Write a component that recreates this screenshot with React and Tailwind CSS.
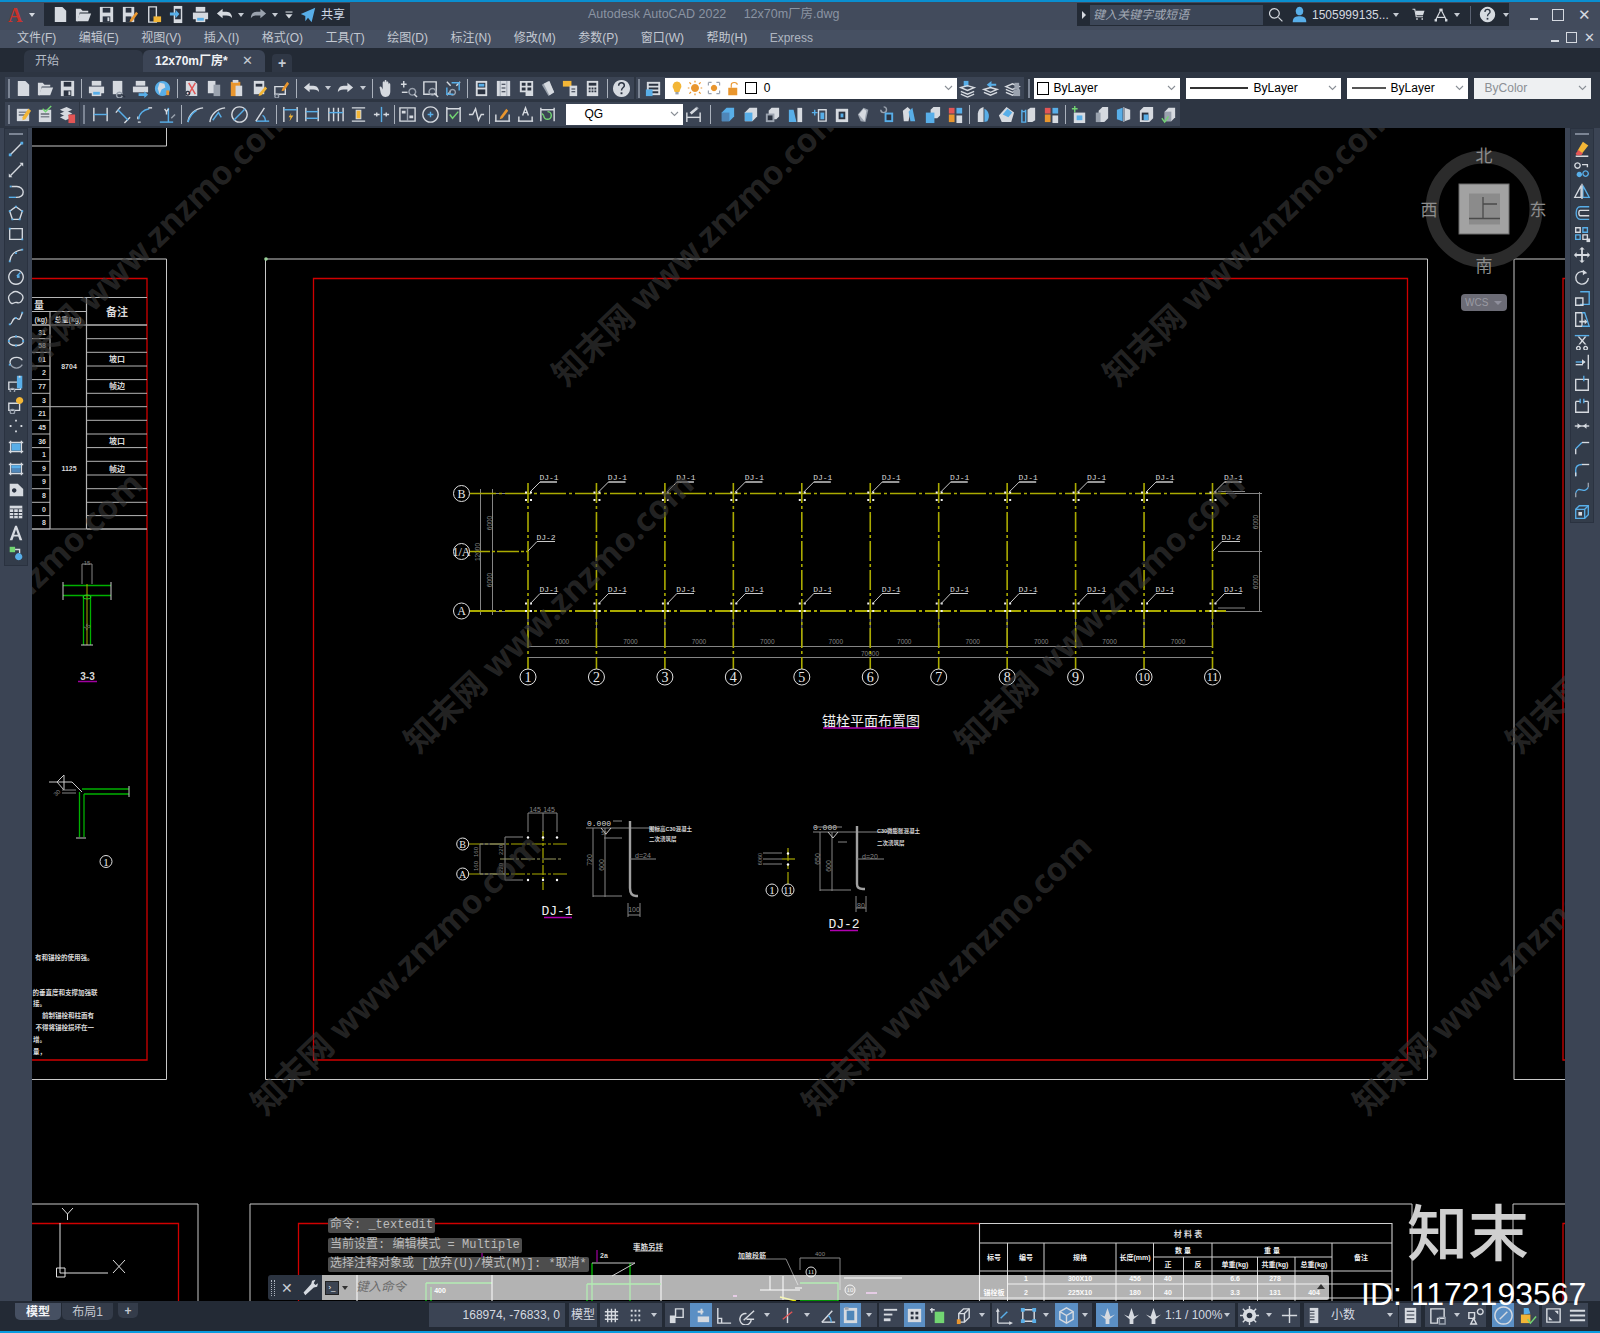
import React from 'react';

const C = { w: '#d6dae0', b: '#58aee8', y: '#f3b636', g: '#72d572', r: '#e25555', k: '#9aa2ae', o: '#e9962e', d: '#2a3240', e: '#4f86b8', p: '#f2f2f2' };
const ICONS = {
  new: 'W|M4 2h8l4 4v12H4z',
  open: 'W|M2 17V4h5l2 2h6v2H6L4 17z;W|M6 9h12l-3 8H3z',
  save: 'W|M3 2h14v16H3z;D|M6 3h8v5H6z;D|M6 12h8v6H6z;W|M11 13h2v4h-2z',
  saveas: 'W|M3 2h12v16H3z;D|M6 3h6v5H6z;D|M6 12h6v6H6z;O|M11 15l6-8 2 2-6 8-3 1z',
  sheet: 'w|M5 2h8v16H5z;D|M7 5h4v9H7z;Y|M10 12h8v6h-8z',
  upload: 'W|M6 1h9v18H6z;D|M7.5 4h6v11h-6z;B|M2 8h6V5l4 4.5-4 4.5v-3H2z',
  print: 'W|M5 2h10v5H5z;W|M2 8h16v7H2z;W|M5 12h10v6H5z;B|M6.5 13.500h7v3h-7z',
  undo: 'W|M2 9l6-5v3h4c4 0 6 3 6 7-1-2-3-3-6-3H8v3z',
  redo: 'K|M18 9l-6-5v3H8c-4 0-6 3-6 7 1-2 3-3 6-3h4v3z',
  redow: 'W|M18 9l-6-5v3H8c-4 0-6 3-6 7 1-2 3-3 6-3h4v3z',
  more: 'W|M5 5h10v1.500H5z;W|M5 9l5 0 5 0-5 6z',
  share: 'B|M2 9L18 2l-4 16-4-5-3 4v-6z',
  preview: 'W|M4 2h10v14H4z;k|M11 14a3 3 0 1 0 .01 0;d|M13 16l4 3',
  plot: 'W|M5 2h10v5H5z;W|M2 8h16v6H2z;B|M8 15h6v-2l4 3.500-4 3.500v-2H8z',
  globe: 'B|M10 2a8 8 0 1 0 .01 0z;W|M7 4l5 1 1 4-4 2-2 5-2-6z;O|M14 12h3v5h-3z',
  cut: 'W|M3 2h9l3 3v13H3z;r|M6 4l7 12;r|M13 4L6 16;d|M5 13a2 2 0 1 0 .01 0',
  copy: 'W|M3 2h8v13H3z;K|M9 6h7v12H9z',
  paste: 'O|M4 3h10v15H4z;W|M9 7h7v11H9z;W|M6 1h6v3H6z',
  match: 'W|M4 2h11v14H4z;D|M6 5h7v3H6z;Y|M10 15l6-7 2 2-6 7-3 1z',
  blockp: 'w|M3 8h11v8H3z;k|M5 16a2 2 0 1 0 .01 0;O|M11 10l5-7 2 2-5 7-3 1z',
  hand: 'W|M3 10c-1-2 1-3 2-1l1 2V4c0-2 2-2 2 0V2.500c0-2 2-2 2 0V4c0-2 2-2 2 0v2c0-2 2-2 2 0v7c0 4-2 6-5 6-2 0-4-1-5-4z',
  zoomr: 'w|M5 2v7M2 5.500h6;w|M3 14h6;k|M14 10a3.500 3.500 0 1 0 .01 0;w|M16 16l3 3',
  zoomw: 'w|M3 3h13v13H3z;k|M12 10a3.500 3.500 0 1 0 .01 0;w|M14 15l4 4',
  zoomp: 'w|M3 3l4 4M13 7l4-4M3 17l4-4;b|M8 4h8v8;k|M9 11a3 3 0 1 0 .01 0;b|M3 9v7h7',
  props: 'W|M4 2h12v16H4z;D|M6 4h8v5H6z;B|M7 5h6v3H7z;D|M6 11h8v5H6z',
  grid2: 'W|M3 2h14v16H3z;K|M6 2h1v16H6z;K|M13 2h1v16h-1z;D|M8 5h4v1H8zM8 9h4v1H8zM8 13h4v1H8z',
  tool: 'W|M3 2h14v16H9v-4H3z;D|M5 4h4v3H5zM11 4h4v3h-4zM5 9h4v3H5zM11 9h4v3h-4z',
  sheetset: 'K|M3 6l7-4 6 12-6 4z;W|M5 5l6-3 5 12-5 3z',
  markup: 'Y|M2 2h9v6H2z;W|M9 7h8v11H9z;D|M11 10h4v1h-4zM11 13h4v1h-4z',
  calc: 'W|M4 2h12v16H4z;D|M6 4h8v3H6z;D|M6 9h2v2H6zM9 9h2v2H9zM12 9h2v2h-2zM6 12h2v2H6zM9 12h2v2H9zM12 12h2v2h-2z',
  help: 'W|M10 1a9 9 0 1 0 .01 0z;D|M9 14h2v2H9z;d|M7 7c0-4 6-4 6 0 0 2-3 2-3 5',
  layers: 'W|M3 3h14v14H3z;D|M5 5h10v2H5zM5 9h10v2H5zM5 13h10v2H5z;B|M2 11h7v7H2z',
  lprev: 'B|M6 2h5v6H6z;w|M3 9l7-2 7 2-7 3z;w|M3 13l7 3 7-3;w|M3 16l7 3 7-3',
  lundo: 'B|M6 6l5-4v3h5v2h-5v3z;w|M3 11l7-2 7 2-7 3z;w|M3 14l7 3 7-3',
  llock: 'w|M3 8l7-3 7 3-7 3z;w|M3 11l7 3 7-3;w|M3 14l7 3 7-3;K|M11 11h7v7h-7z;K|M12 4h5v7h-5z',
  bulb: 'Y|M10 2a6 6 0 0 1 4 10l-1 3H7l-1-3a6 6 0 0 1 4-10z;K|M8 15h4v3H8z',
  sun: 'O|M10 5a5 5 0 1 0 .01 0z;o|M10 1v2M10 17v2M1 10h2M17 10h2M3 3l2 2M15 15l2 2M3 17l2-2M15 5l2-2',
  frz: 'k|M3 3h4M13 3h4M3 3v4M17 3v4M3 13v4M17 13v4M3 17h4M13 17h4;O|M10 6a4 4 0 1 0 .01 0z',
  lock: 'O|M3 9h12v10H3z;o|M7 9V5c0-4 8-4 8 0',
  note: 'W|M3 4h13v13H3z;D|M5 7h9v1H5zM5 10h9v1H5z;Y|M9 13l6-9 3 2-6 9-3 1z',
  notechk: 'W|M3 5h13v13H3z;D|M5 9h9v1H5zM5 12h9v1H5z;g|M7 4l3 3 6-6',
  layerr: 'W|M2 5l7-3 6 3-7 3z;W|M2 9l7-3 6 3-7 3z;W|M2 13l7-3 6 3-7 3z;R|M11 10h7v9h-7z',
  dlin: 'w|M3 3v14M17 3v14;b|M3 10h14',
  dali: 'w|M3 8l5-6M12 19l6-6;b|M5 5l11 11',
  dang: 'w|M3 18h3M3 15V12;b|M4 15C4 9 9 5 15 4;w|M14 3l4 0',
  dord: 'b|M3 18h14;b|M12 18V3;w|M8 4l2 3 2-3M10 7v3;k|M15 14l4-4',
  arc: 'w|M2 18C3 10 9 4 18 3;b|M2 18C4 12 7 8 11 6',
  arcd: 'w|M2 18C3 10 9 4 18 3;b|M5 16l6-8 3 5',
  cir: 'w|M10 2a8 8 0 1 0 .01 0z;b|M4 16L16 4',
  ang: 'b|M3 17h14;w|M3 17L12 3;b|M10 11c2 1 3 3 3 6',
  dq: 'w|M3 2v16M17 2v16;Y|M8 13l3-5-1 3h3l-4 6 1-4z;b|M3 5h14',
  dbase: 'w|M3 3v14M16 3v14;b|M3 7h13;b|M3 14h13',
  dcont: 'w|M3 3v14M8 3v14M13 3v14M18 3v14;b|M3 8h15',
  dspace: 'w|M3 3h14M3 17h14;W|M7 5h6v10H7z;Y|M8 6h4v8H8z',
  dbreak: 'b|M10 2v16;w|M2 10h6M12 10h6;w|M5 8v4M15 8v4',
  tol: 'w|M2 3h16v14H2z;k|M10 3v14;W|M4 6h4v3H4zM12 11h4v3h-4z',
  ccen: 'w|M10 2a8 8 0 1 0 .01 0z;b|M10 7v6M7 10h6',
  insp: 'w|M3 2v16M17 2v16M3 4h14;g|M6 10l3 4 6-7',
  jog: 'w|M2 10h4l3-6 3 12 3-6h3;',
  dedit: 'w|M2 17h16;w|M3 10v7M17 10v7;O|M8 12l6-8 2 2-6 8-3 1z',
  dtedit: 'w|M2 17h16;w|M3 12v5M17 12v5;w|M7 11l3-8 3 8M8 8h4',
  dupd: 'w|M3 3v14M17 3v14M3 5h14;g|M10 7a4 4 0 1 1-4 4;g|M6 11l-2-2',
  dstyle: 'w|M3 8v10M17 8v10;w|M3 13h14;W|M6 8l7-6 2 2-7 6z;k|M13 2l2 2',
  solA: 'B|M4 8l5-5h8v9l-5 5H4z;E|M4 8h8v9H4z',
  solB: 'W|M4 8l5-5h8v9l-5 5H4z;B|M4 8h8v9H4z',
  solC: 'W|M6 6l3-3h8v9l-3 3H6z;K|M3 9h9v9H3z;D|M5 11h5v5H5z',
  solD: 'B|M3 5h5l3 13H3z;W|M12 3h5v15h-5z',
  solE: 'b|M3 8h6M6 5v6;w|M10 5h8v12h-8z;B|M12 8h4v7h-4z',
  solF: 'W|M4 4h13v14H4z;D|M7 7h7v8H7z;B|M9 9h3v4H9z',
  solG: 'K|M3 10l6-7 5 2-3 13-5-1z;W|M4 10l5-6 3 2-2 11z;R|M13 2l5 5M18 2l-5 5',
  solH: 'k|M4 5a3 3 0 1 0 3-3;B|M8 8h9v10H8z;D|M10 10h5v6h-5z',
  solI: 'W|M3 6l5-4 3 3-2 12H4z;B|M9 7l4-4 3 14h-5z',
  solJ: 'W|M8 5l3-3h7v9l-3 3H8z;B|M3 8h9v11H3z',
  solK: 'R|M3 3h6v6H3z;B|M11 3h6v6h-6z;O|M3 10h6v8H3z;W|M11 11h6v8h-6z',
  solL: 'W|M4 9a8 8 0 0 1 6-7v16H4z;B|M11 4c5 2 6 9 3 13l-3 1z',
  solM: 'W|M2 11l8-9 8 6-3 10H5z;B|M6 10l5-6 5 4-4 5z',
  solN: 'b|M3 5a2 2 0 1 0 4 0v13H3z;W|M9 5l3-2h5v13l-3 2H9z',
  solO: 'g|M5 1v7M2 4h6;W|M4 8h12v11H4z;B|M7 11h6v5H7z',
  solP: 'W|M7 6l4-4h6v12l-4 4H7z;K|M4 8h5v10H4z',
  solQ: 'B|M2 5l6-2v14l-6-2z;W|M10 3l6 2v10l-6 2z;K|M8.500 2h1.500v16H8.500z',
  solR: 'W|M3 6l4-4h10v12l-4 4H3z;D|M5 8h7v8H5z;B|M7 10h5v6H7z',
  solS: 'W|M6 7l4-4h7v10l-4 4H6z;K|M6 7h7v10H6z;g|M3 14l3 4 4-6',
  mline: 'w|M4 16L16 4;B|M2 15h3v3H2zM15 2h3v3h-3z',
  mxline: 'w|M4 16L16 4;W|M14 2h4v4zM2 18v-4l4 4z',
  mpl: 'b|M2 17h8;w|M10 17c6 0 8-3 8-6s-3-6-7-6H5;B|M3 4h2v2H3z',
  mpoly: 'w|M10 3l7 5-3 9H6L3 8z;B|M9 2h2v2H9zM16 7h2v2h-2zM13 16h2v2h-2zM5 16h2v2H5zM2 7h2v2H2z',
  mrect: 'w|M3 4h14v12H3z;B|M2 3h2v2H2zM16 15h2v2h-2z',
  marc: 'w|M3 17C4 9 10 5 17 4;B|M2 16h2v2H2zM9 7h2v2H9zM16 3h2v2h-2z',
  mcir: 'w|M10 2a8 8 0 1 0 .01 0z;B|M11 8h3v3h-3z;b|M11 9l4-4',
  mrev: 'w|M6 4c4-3 7 0 9 1s4 4 2 7-3 4-6 3-4 2-6 1-4-6-3-8 2-3 4-4z',
  mspl: 'w|M3 16c3 0 3-8 7-7s3 5 7-6;B|M2 15h2v2H2zM9 8h2v2H9zM16 2h2v2h-2z',
  mell: 'w|M10 5c-11 0-11 10 0 10s11-10 0-10z;B|M1 9h2v2H1zM17 9h2v2h-2zM9 4h2v2H9zM9 14h2v2H9z',
  mela: 'w|M4 13C0 5 14 2 17 8;k|M4 13c3 5 10 5 13 0;B|M2 12h2v2H2z',
  mins: 'w|M2 9h13v8H2z;k|M6 16a2.500 2.500 0 1 0 .01 0;B|M11 2h6v14h-6z;W|M13 2h2v2h-2z',
  mblk: 'w|M2 8h12v8H2z;k|M6 15a2.500 2.500 0 1 0 .01 0;Y|M14 1a4 4 0 1 0 .01 0z',
  mpt: 'W|M9 3h2v2H9zM3 9h2v2H3zM15 9h2v2h-2zM9 15h2v2H9z',
  mhat: 'w|M4 3v14M16 3v14M2 5h16M2 15h16;B|M5 6h10v8H5z',
  mgra: 'w|M4 3v14M16 3v14M2 5h16M2 15h16;E|M5 6h10v8H5z;B|M5 6h10v3H5z',
  mreg: 'W|M3 3h9l6 6v8H3z;D|M8 8a2.500 2.500 0 1 0 .01 0z',
  mtbl: 'W|M3 3h14v14H3z;D|M3 6h14v1H3zM3 10h14v1H3zM3 13.500h14v1H3zM7 6h1v11H7zM12 6h1v11h-1z',
  mtxt: 'W|M9 2h2l6 16h-3l-1.500-4h-5L6 18H3zM10 6l-2 6h4z',
  madd: 'G|M3 2h6v6H3z;w|M9 5h5v4;B|M13 9a4 4 0 1 0 .01 0z',
  erase: 'p|M3 18h14;Y|M11 2l6 4-7 9-5-3z;R|M6 11l5 4-2 2H4l-1-2z',
  rcopy: 'w|M5 2a3 3 0 1 0 .01 0z;w|M10 4h6v3;B|M7 12a3 3 0 1 0 .01 0z;b|M14 11a3 3 0 1 0 .01 0z',
  mirror: 'w|M9 4v13H2z;b|M11 4v13h7z;w|M10 2v17',
  offset: 'b|M18 3H8C2 3 2 17 8 17h10;w|M18 7H8C6 7 6 13 8 13h10',
  array: 'w|M3 3h5v5H3z;b|M11 3h5v5h-5z;b|M3 11h5v5H3z;w|M11 11h5v5h-5z;W|M15 15h4v4h-4z',
  move: 'W|M10 1l3 3h-2v5h5V7l3 3-3 3v-2h-5v5h2l-3 3-3-3h2v-5H4v2l-3-3 3-3v2h5V4H7z',
  rot: 'w|M15 6a7 7 0 1 0 2 5;W|M11 2l4 3-4 3z',
  scale: 'b|M8 3h10v14H8;w|M3 10h8v8H3z',
  stretch: 'w|M3 3h7v15H3z;b|M10 3h3l5 15h-8;W|M7 12h6v-2l3 3-3 3v-2H7z',
  trim: 'b|M2 4h16;W|M5 5l8 9h2L7 5z;W|M13 5l-7 9h2l7-9z;w|M6 16a2 2 0 1 0 .01 0;w|M14 16a2 2 0 1 0 .01 0',
  extend: 'w|M17 2v16;b|M3 10h10;W|M10 7l4 3-4 3z;w|M3 13h8',
  brk: 'w|M3 6h14v12H3z;b|M12 2v6;',
  brk2: 'w|M3 6h5M12 6h5M3 6v12h14V6;b|M8 3v5M12 3v5',
  join: 'w|M2 10h16;W|M5 7l4 3-4 3zM15 7l-4 3 4 3z',
  cham: 'w|M3 18v-6;b|M3 12l7-7;w|M10 5h8',
  fil: 'b|M3 18v-7c0-4 3-6 7-6;w|M10 5h8;w|M3 18v-4',
  blnd: 'k|M3 18v-5;b|M3 13c4-9 8 3 14-6;k|M17 7V2',
  box3: 'b|M3 7l4-4h10v10l-4 4H3z;b|M3 7h10v10M13 7l4-4;W|M6 10h4v4H6z',
  grid: 'w|M6 3v14M10 3v14M14 3v14M3 6h14M3 10h14M3 14h14',
  sgrid: 'W|M5 4h2v2H5zM9 4h2v2H9zM13 4h2v2h-2zM5 9h2v2H5zM9 9h2v2H9zM13 9h2v2h-2zM5 14h2v2H5zM9 14h2v2H9zM13 14h2v2h-2z',
  stm: 'w|M9 3h8v9H9z;W|M3 10h6v8H3z',
  stinf: 'W|M9 3h2v6H9zM6 5h6v2H6z;W|M6 11h12v6H6z',
  stort: 'w|M4 2v16h14M4 13h4v5',
  stpol: 'w|M10 8a6 6 0 1 0 5 6;w|M7 15L18 5M10 14h8',
  stisn: 'w|M10 2v16;W|M6 6l8 8;r|M5 14l10-8',
  stang: 'w|M3 17h14;w|M3 17L14 5;b|M10 10c2 2 3 4 3 7',
  stbox: 'W|M3 2h14v16H3z;E|M6 5h8v10H6z;K|M4 1h4v3H4z',
  stlw: 'W|M3 3h14v2H3z;W|M3 8h9v2H3z;W|M3 13h7v3H3z',
  sttr: 'W|M3 3h14v14H3z;D|M6 6h3v3H6zM11 6h3v3h-3zM6 11h3v3H6zM11 11h3v3h-3z',
  stadd: 'G|M6 6h10v12H6z;w|M3 2v5M1 4h5',
  stiso: 'w|M5 8l5-5h6v9l-5 5H5z;w|M5 8h6v9M11 8l5-5;O|M3 14h4v5H3z',
  stucs: 'w|M4 18V5M4 18h13;W|M2 6l2-4 2 4zM16 16l4 2-4 2z;b|M7 13l7-7',
  stann: 'w|M4 4h12v12H4z;B|M2 2h4v4H2zM14 2h4v4h-4zM14 14h4v4h-4zM2 14h4v4H2z',
  stwork: 'w|M10 2l7 4v8l-7 4-7-4V6z;w|M3 6l7 4 7-4M10 10v8',
  stannA: 'W|M10 2l3 9 5-2-6 5v5H8v-5L2 9l5 2z;',
  gear: 'W|M10 3a7 7 0 1 0 .01 0z;w|M10 0v4M10 16v4M0 10h4M16 10h4M3 3l3 3M14 14l3 3M3 17l3-3M14 6l3-3;D|M10 7a3 3 0 1 0 .01 0z',
  plus: 'w|M10 2v16M2 10h16',
  ruler: 'W|M5 2h9v16H5z;D|M5 5h5v1H5zM5 8h5v1H5zM5 11h5v1H5zM5 14h5v1H5z',
  stprop: 'W|M4 2h12v16H4z;D|M6 5h8v1H6zM6 9h8v1H6zM6 13h8v1H6z',
  stlay: 'w|M3 3h14v10h-7v5H3z;k|M12 12h6v7h-6z',
  stshp: 'w|M3 7h6v6H3z;w|M15 3a3 3 0 1 0 .01 0z;w|M8 13l3 6H5z',
  stdial: 'w|M10 1a9 9 0 1 0 .01 0z;w|M6 14l8-8',
  stchk: 'B|M5 2h5l2 6-7 1z;Y|M2 9h10v9H2z;g|M9 14l3 4 6-7',
  stfull: 'w|M3 3h14v14H3z;W|M5 11l4-4M11 5h4v4M5 11v4h4',
  ham: 'W|M2 4h16v2H2zM2 9h16v2H2zM2 14h16v2H2z',
  search: 'w|M8 2a6 6 0 1 0 .01 0z;w|M13 13l5 5',
  user: 'B|M10 1a4.500 5 0 1 0 .01 0z;B|M2 19c0-6 4-7 8-7s8 1 8 7z',
  cart: 'w|M2 3h3l2 10h9;W|M6 5h12l-2 6H7z;W|M7 15h2v2H7zM14 15h2v2h-2z',
  aut: 'w|M10 3L3 17;w|M10 3l7 14;w|M5 13h10;W|M8 2h4v3H8z;W|M2 15h3v3H2zM15 15h3v3h-3z',
  wrench: 'W|M17 1l-4 1-1 4-9 10 2 3 10-9 4-1 1-4-3 2-2-2z',
};
const parsed = Object.fromEntries(Object.entries(ICONS).map(([k, v]) => [k, v.split(';').filter(Boolean).map((s) => s.split('|'))]));

function Ic({ n, s = 20 }) {
  const p = parsed[n] || [];
  return (
    <svg width={s} height={s} viewBox="0 0 20 20" className="block shrink-0">
      {p.map(([c, d], i) => {
        const up = c === c.toUpperCase();
        const col = C[c.toLowerCase()];
        return <path key={i} d={d} fill={up ? col : 'none'} stroke={up ? 'none' : col} strokeWidth="1.5" />;
      })}
    </svg>
  );
}
const Cell = ({ n, w = 'w-[22.3px]', s = 19, hl }) => (
  <div className={`${w} h-full flex items-center justify-center shrink-0 ${hl ? 'bg-[#5b8fc4]' : ''}`}><Ic n={n} s={s} /></div>
);
const Car = ({ w = 'w-[14px]' }) => (
  <div className={`${w} h-full flex items-center justify-center shrink-0`}>
    <div className="w-0 h-0 border-x-[3px] border-x-transparent border-t-[4px] border-t-[#c5cad2]" />
  </div>
);
const Sep = ({ w = 'w-[6px]' }) => (
  <div className={`${w} h-full flex items-center justify-center shrink-0`}><div className="w-px h-[19px] bg-[#aab1bc]" /></div>
);
const Grip = ({ w = 'w-[7px]' }) => (
  <div className={`${w} h-full flex items-center justify-center shrink-0`}><div className="w-[2px] h-[19px] bg-[#7c8594]" /></div>
);
const Chev = () => (
  <svg width="9" height="6" viewBox="0 0 9 6" className="shrink-0"><path d="M1 1l3.500 3.500L8 1" stroke="#8a8f96" fill="none" strokeWidth="1.100" /></svg>
);
const Many = ({ list, w }) => list.map((n, i) => <Cell key={i} n={n} w={w} />);
const Combo = ({ w, children, light }) => (
  <div className={`${w} h-[21px] ${light ? 'bg-[#eef0f2]' : 'bg-white'} flex items-center pr-[4px] shrink-0`}>
    <div className="flex-1 flex items-center min-w-0 h-full">{children}</div>
    <Chev />
  </div>
);

function TitleBar() {
  return (
    <div className="h-[30px] bg-[#424b5c] border-t-[2px] border-t-[#0a8fd0] flex items-center pb-[3px] relative shrink-0">
      <div className="w-[44px] flex items-center pl-[8px] shrink-0">
        <span className="text-[#c8332b] text-[20px] font-bold leading-none w-[20px] font-['Liberation_Serif',serif]">A</span>
        <div className="w-0 h-0 border-x-[3px] border-x-transparent border-t-[4px] border-t-[#d5d9e0] ml-[1px]" />
      </div>
      <div className="h-[23px] w-[306px] bg-[#232a35] flex items-center pl-[5px] shrink-0">
        <Many list={['new', 'open', 'save', 'saveas']} w="w-[23px]" />
        <Cell n="sheet" w="w-[25px]" />
        <Cell n="upload" w="w-[23px]" />
        <Cell n="print" w="w-[23px]" />
        <Cell n="undo" w="w-[24px]" />
        <Car w="w-[10px]" />
        <Cell n="redo" w="w-[24px]" />
        <Car w="w-[10px]" />
        <Cell n="more" w="w-[18px]" s={14} />
        <Cell n="share" w="w-[20px]" s={18} />
        <span className="text-[12px] text-[#cdd7e4] ml-[3px] leading-none whitespace-nowrap">共享</span>
      </div>
      <div className="w-[238px] shrink-0" />
      <div className="w-[489px] text-[12.500px] text-[#8b94a3] whitespace-pre shrink-0 leading-none">Autodesk AutoCAD 2022     12x70m厂房.dwg</div>
      <div className="h-[23px] w-[432px] bg-[#232a35] flex items-center shrink-0">
        <div className="w-[13px] flex justify-center"><div className="w-0 h-0 border-y-[4px] border-y-transparent border-l-[4px] border-l-[#d5d9e0]" /></div>
        <div className="w-[173px] h-[20px] bg-[#3c4657] flex items-center pl-[3px] text-[12px] italic text-[#a3aab6] shrink-0">键入关键字或短语</div>
        <Cell n="search" w="w-[26px]" s={16} />
        <Cell n="user" w="w-[20px]" s={17} />
        <span className="text-[12px] text-[#d5d9e0] ml-[3px] w-[80px] whitespace-nowrap shrink-0">1505999135...</span>
        <Car w="w-[8px]" />
        <Cell n="cart" w="w-[36px]" s={15} />
        <Cell n="aut" w="w-[10px]" s={16} />
        <Car w="w-[22px]" />
        <div className="w-px h-[18px] bg-[#5a6272] ml-[2px]" />
        <Cell n="help" w="w-[32px]" s={17} />
        <Car w="w-[6px]" />
      </div>
      <div className="flex-1 flex items-center justify-around pl-[14px] pr-[2px] text-[#d5d9e0]">
        <div className="w-[8px] h-[2px] bg-[#d5d9e0] mt-[8px]" />
        <div className="w-[12px] h-[12px] border-[1.500px] border-[#d5d9e0]" />
        <span className="text-[15px] leading-none">✕</span>
      </div>
    </div>
  );
}

function MenuBar() {
  const items = ['文件(F)', '编辑(E)', '视图(V)', '插入(I)', '格式(O)', '工具(T)', '绘图(D)', '标注(N)', '修改(M)', '参数(P)', '窗口(W)', '帮助(H)'];
  return (
    <div className="h-[18px] bg-[#465062] flex items-center pl-[17px] pr-[5px] pb-[3px] text-[12px] leading-none text-[#c3c8d1] shrink-0 gap-[22.500px]">
      {items.map((m) => <span key={m} className="whitespace-nowrap">{m}</span>)}
      <span className="text-[#aeb5c0]">Express</span>
      <div className="flex-1 flex items-center justify-end gap-[7px]">
        <div className="w-[8px] h-[2px] bg-[#d5d9e0] mt-[7px]" />
        <div className="w-[11px] h-[11px] border border-[#d5d9e0]" />
        <span className="text-[13px] text-[#d5d9e0] leading-none">✕</span>
      </div>
    </div>
  );
}

function Tabs() {
  return (
    <div className="h-[24px] bg-[#232a35] flex items-end pl-[24px] shrink-0">
      <div className="w-[119px] h-[22px] bg-[#2f3745] rounded-t-[6px] flex items-center pl-[11px] text-[12px] text-[#b5bbc5]">开始</div>
      <div className="w-[122px] h-[22px] bg-[#3c4556] rounded-t-[6px] flex items-center pl-[12px] text-[12px] font-bold text-[#f0f2f5] whitespace-nowrap">
        12x70m厂房*<span className="ml-[14px] text-[#c5cad2] text-[13px] font-normal">✕</span>
      </div>
      <div className="w-[20px] h-[18px] bg-[#2f3745] ml-[7px] rounded-t-[4px] flex items-center justify-center text-[14px] leading-none text-[#c5cad2] font-bold">+</div>
    </div>
  );
}

function Toolbars() {
  return (
    <div className="h-[56px] bg-[#2d3542] shrink-0 flex flex-col pt-[5px] gap-[3px] pl-[5px]">
      <div className="h-[22px] flex items-center">
        <div className="h-full bg-[#3b4454] flex items-center">
          <Grip />
          <Many list={['new', 'open', 'save']} />
          <Sep />
          <Many list={['print', 'preview', 'plot', 'globe']} />
          <Sep w="w-[7px]" />
          <Many list={['cut', 'copy', 'paste', 'match', 'blockp']} />
          <Sep w="w-[8px]" />
          <Cell n="undo" />
          <Car w="w-[11px]" />
          <Cell n="redow" />
          <Car w="w-[14px]" />
          <Sep w="w-[5px]" />
          <Many list={['hand', 'zoomr', 'zoomw', 'zoomp']} />
          <Sep />
          <Many list={['props', 'grid2', 'tool', 'sheetset', 'markup', 'calc']} />
          <Sep />
          <Cell n="help" />
          <div className="w-[2px]" />
        </div>
        <div className="w-[2px]" />
        <div className="h-full bg-[#3b4454] flex items-center">
          <Grip w="w-[6px]" />
          <Cell n="layers" />
          <Combo w="w-[292px]">
            <div className="w-[3px]" />
            <Cell n="bulb" w="w-[18px]" s={16} />
            <Cell n="sun" w="w-[18px]" s={16} />
            <Cell n="frz" w="w-[21px]" s={16} />
            <Cell n="lock" w="w-[17px]" s={15} />
            <div className="w-[12px] h-[12px] border border-black mx-[3px] shrink-0" />
            <span className="text-[12px] text-black ml-[4px]">0</span>
          </Combo>
          <Many list={['lprev', 'lundo', 'llock']} />
        </div>
        <Grip w="w-[10px]" />
        <Combo w="w-[146px]">
          <div className="w-[12px] h-[13px] border border-black ml-[3px] mr-[5px] shrink-0" />
          <span className="text-[12px] text-black">ByLayer</span>
        </Combo>
        <div className="w-[6px]" />
        <Combo w="w-[155px]">
          <div className="w-[58px] h-[2px] bg-[#333] ml-[4px] mr-[6px] shrink-0" />
          <span className="text-[12px] text-black">ByLayer</span>
        </Combo>
        <div className="w-[6px]" />
        <Combo w="w-[121px]">
          <div className="w-[34px] h-[2px] bg-[#555] ml-[5px] mr-[5px] shrink-0" />
          <span className="text-[12px] text-black">ByLayer</span>
        </Combo>
        <div className="w-[6px]" />
        <Combo w="w-[117px]" light>
          <span className="text-[12px] text-[#8b8f95] ml-[11px]">ByColor</span>
        </Combo>
      </div>
      <div className="h-[24px] flex items-center">
        <div className="h-full bg-[#3b4454] flex items-center">
          <Grip />
          <Many list={['note', 'notechk', 'layerr']} />
        </div>
        <div className="h-full bg-[#3b4454] flex items-center ml-[1px]">
          <Grip w="w-[9px]" />
          <Many list={['dlin', 'dali', 'dang', 'dord']} />
          <Sep />
          <Many list={['arc', 'arcd', 'cir', 'ang']} />
          <Sep w="w-[6px]" />
          <Many list={['dq', 'dbase', 'dcont']} />
          <Cell n="dspace" w="w-[24px]" />
          <Many list={['dbreak']} />
          <Sep w="w-[4px]" />
          <Many list={['tol', 'ccen', 'insp', 'jog']} w="w-[22.800px]" />
          <Sep w="w-[4px]" />
          <Many list={['dedit', 'dtedit', 'dupd']} />
          <div className="w-[7px]" />
          <Combo w="w-[117px]"><span className="text-[12px] text-black ml-[19px]">QG</span></Combo>
          <Cell n="dstyle" />
          <Sep w="w-[11px]" />
          <Many list={['solA', 'solB', 'solC', 'solD', 'solE', 'solF', 'solG', 'solH', 'solI', 'solJ', 'solK']} w="w-[22.800px]" />
          <Sep w="w-[6px]" />
          <Many list={['solL', 'solM', 'solN', 'solK']} w="w-[22.500px]" />
          <Sep w="w-[6px]" />
          <Many list={['solO', 'solP', 'solQ', 'solR', 'solS']} w="w-[22.200px]" />
        </div>
      </div>
    </div>
  );
}

const LEFT = ['mline', 'mxline', 'mpl', 'mpoly', 'mrect', 'marc', 'mcir', 'mrev', 'mspl', 'mell', 'mela', 'mins', 'mblk', 'mpt', 'mhat', 'mgra', 'mreg', 'mtbl', 'mtxt', 'madd'];
const RIGHT = ['erase', 'rcopy', 'mirror', 'offset', 'array', 'move', 'rot', 'scale', 'stretch', 'trim', 'extend', 'brk', 'brk2', 'join', 'cham', 'fil', 'blnd', 'box3'];

const Side = ({ list }) => (
  <div className="w-[24px] bg-[#333c4a] border border-[#2a3240] flex flex-col items-center">
    <div className="h-[9px] flex items-center"><div className="w-[14px] h-[2px] bg-[#7c8594]" /></div>
    {list.map((n, i) => <div key={i} className="h-[21.350px] flex items-center justify-center"><Ic n={n} s={18} /></div>)}
  </div>
);

const L = ({ d, c = '#c8c8c8', w = 1, da }) => <path d={d} stroke={c} strokeWidth={w} fill="none" strokeDasharray={da} />;
const GR = '#858585';
const YE = '#aaaa00';
const T = ({ x, y, s = 7, c = '#d8d8d8', f = 'a', a = 'middle', w, r, children }) => (
  <text x={x} y={y} fontSize={s} fill={c} textAnchor={a} dominantBaseline="central" fontWeight={w} transform={r ? `rotate(${r} ${x} ${y})` : undefined}
    fontFamily={f === 'a' ? "'Liberation Sans','Noto Sans CJK SC',sans-serif" : "'Liberation Mono','Noto Sans CJK SC',monospace"}>{children}</text>
);
const Bub = ({ x, y, r = 8, t, s = 12 }) => (
  <g>
    <circle cx={x} cy={y} r={r} stroke="#e0e0e0" fill="#000" strokeWidth="1" />
    <text x={x} y={y} fontSize={s} fill="#e8e8e8" textAnchor="middle" dominantBaseline="central" fontFamily="'Liberation Serif',serif">{t}</text>
  </g>
);

const XS = Array.from({ length: 11 }, (_, i) => 528 + 68.45 * i);
const WATER = [[15, 388], [566, 388], [1117, 388], [-133, 755], [418, 755], [969, 755], [1520, 755], [-286, 1117], [265, 1117], [816, 1117], [1367, 1117], [713, 26], [1264, 26], [162, 26]];
const LNUMS = ['31', '58', '01', '2', '77', '3', '21', '45', '36', '1', '9', '9', '8', '0', '8'];

function Plan() {
  return (
    <g>
      <L d="M480.500 493.500H525M480.500 611.500H525M480.500 489V615M492.500 489V615" c={GR} />
      <L d="M1218 493.500H1262M1218 611.500H1262M1218 551.500H1262M1259.500 492V612" c={GR} />
      <L d="M1218 491.500H1245M1218 608H1245" c={GR} />
      <T x={489} y={523} s={6.500} c={GR} r={-90}>6000</T>
      <T x={489} y={580} s={6.500} c={GR} r={-90}>6000</T>
      <T x={477} y={552} s={6.500} c={GR} r={-90}>12000</T>
      <T x={1255} y={522} s={6.500} c={GR} r={-90}>6000</T>
      <T x={1255} y={582} s={6.500} c={GR} r={-90}>6000</T>
      <L d="M528 646.500H1212.500M528 657.500H1212.500" c={GR} />
      {XS.map((x) => <L key={x} d={`M${x} 612V646`} c={GR} />)}
      {XS.slice(0, 10).map((x) => <T key={x} x={x + 34} y={641} s={6.500} c={GR}>7000</T>)}
      <T x={870} y={653} s={6.500} c={GR}>70000</T>
      <L d="M470 493.500H1226" c={YE} w={1.500} da="26 3 3 3" />
      <L d="M470 611H1226" c={YE} w={1.800} da="26 3 3 3" />
      <L d="M468 551.500H528" c={YE} w={1.500} da="22 2 3 2" />
      {XS.map((x) => <L key={x} d={`M${x} 483V669`} c={YE} w={1.600} da="20 3 3 3" />)}
      {XS.map((x) => (
        <g key={x}>
          {[492.500, 500, 603.500, 611].map((y) => (
            <path key={y} d={`M${x - 3} ${y - 1}h2v2h-2zM${x + 2} ${y - 1}h2v2h-2z`} fill="#f0f0f0" />
          ))}
          <L d={`M${x + 12} 482H${x + 29}L${x + 12} 482L${x + 2} 492`} />
          <T x={x + 21} y={477.500} s={8} f="m">DJ-1</T>
          <L d={`M${x + 12} 593.500H${x + 29}L${x + 12} 593.500L${x + 2} 604`} />
          <T x={x + 21} y={589} s={8} f="m">DJ-1</T>
        </g>
      ))}
      <L d="M537 541.500H555M537 541.500L528 551" />
      <T x={546} y={537} s={8} f="m">DJ-2</T>
      <L d="M1222 541.500H1240M1222 541.500L1213 551" />
      <T x={1231} y={537} s={8} f="m">DJ-2</T>
      <Bub x={461.500} y={493.500} t="B" s={12} />
      <Bub x={461.500} y={551.500} t="1/A" s={12} />
      <Bub x={461.500} y={611} t="A" s={12} />
      {XS.map((x, i) => <Bub key={x} x={x} y={677} t={String(i + 1)} s={i > 8 ? 12 : 14} />)}
      <T x={871} y={721} s={14} c="#f0f0f0">锚栓平面布置图</T>
      <L d="M823 728H919" c="#b000b0" w={1.500} />
    </g>
  );
}

function Details() {
  return (
    <g>
      <Bub x={462.700} y={844} r={6} t="B" s={10} />
      <Bub x={462.700} y={874} r={6} t="A" s={10} />
      <L d="M469 844H568M469 874H568" c={YE} w={1.200} da="14 2 3 2" />
      <L d="M500 859H563" c="#9a9a60" w={1.200} da="14 2 3 2" />
      <L d="M543 831V890" c={YE} w={1.200} da="10 2 3 2" />
      <L d="M480 844V874M505 837V880M480 844H505M480 874H505M505 837H523M505 880H523" c={GR} />
      <L d="M528 813H557M528 813V832M543 813V832M557 813V832" c={GR} />
      <T x={535} y={809} s={7} c={GR}>145</T>
      <T x={549} y={809} s={7} c={GR}>145</T>
      <T x={476} y={852} s={6} c={GR} r={-90}>160</T>
      <T x={476} y={866} s={6} c={GR} r={-90}>160</T>
      <T x={501} y={850} s={6} c={GR} r={-90}>220</T>
      <T x={501} y={868} s={6} c={GR} r={-90}>220</T>
      {[[528, 837.500], [543, 837.500], [557, 837.500], [528, 880], [543, 880], [557, 880]].map(([x, y], i) => <circle key={i} cx={x} cy={y} r="1.200" fill="#fff" />)}
      <T x={557} y={911} s={13} f="m" c="#f0f0f0">DJ-1</T>
      <L d="M544 917.500H572" c="#b000b0" w={1.500} />
      <T x={599} y={823} s={8} f="m">0.000</T>
      <L d="M586 828H660M613 821H622M604 838H622M593 896H622M605 828V897M593 828V897" c={GR} />
      <L d="M601 828l5 6 5-6" />
      <L d="M630 821V888q0 8 6 8H638" w={2.400} c="#a0a0a0" />
      <L d="M630 859H656" c={GR} />
      <T x={643} y={855} s={7} c={GR}>d=24</T>
      <T x={589} y={860} s={7} c={GR} r={-90}>720</T>
      <T x={601} y={865} s={7} c={GR} r={-90}>600</T>
      <T x={604} y={833} s={5} c={GR}>50</T>
      <T x={649} y={829} s={5.500} a="start" w="bold">图标高C30混凝土</T>
      <T x={649} y={839} s={5.500} a="start" w="bold">二次浇筑层</T>
      <L d="M628 903V917M640 903V917M628 915H640" c={GR} />
      <T x={634} y={909} s={7} c={GR}>100</T>
      <L d="M763 853H782M763 859H782M763 864H782" c={GR} />
      <T x={760} y={859} s={5.500} c={GR} r={-90}>6060</T>
      <L d="M788 848V895" c={YE} w={1.200} da="13 3 5 3" />
      <L d="M782 859H795" c={YE} w={1.200} />
      <circle cx="788" cy="853.500" r="1.200" fill="#fff" />
      <circle cx="788" cy="864.500" r="1.200" fill="#fff" />
      <Bub x={772} y={890} r={6} t="1" s={11} />
      <Bub x={788} y={890} r={6} t="11" s={10} />
      <T x={825} y={827} s={8} f="m">0.000</T>
      <L d="M813 832H890M815 827H842M838 842H847M820 890H851M832 832V891M820 832V891" c={GR} />
      <L d="M828 832l5 6 5-6" />
      <L d="M857 826V884q0 5 6 5H865" w={2.400} c="#a0a0a0" />
      <L d="M857 859H884" c={GR} />
      <T x={870} y={856} s={7} c={GR}>d=20</T>
      <T x={817} y={859} s={7} c={GR} r={-90}>650</T>
      <T x={828} y={866} s={7} c={GR} r={-90}>600</T>
      <T x={877} y={831} s={5.500} a="start" w="bold">C30微膨胀混凝土</T>
      <T x={877} y={843} s={5.500} a="start" w="bold">二次浇筑层</T>
      <L d="M856 896V912M866 896V912M856 908H866" c={GR} />
      <T x={861} y={905} s={7} c={GR}>80</T>
      <T x={844} y={924} s={13} f="m" c="#f0f0f0">DJ-2</T>
      <L d="M830 930.500H858" c="#b000b0" w={1.500} />
    </g>
  );
}

function LeftSheet() {
  const rows = [325, 338.700, 352.300, 366, 379.600, 393.300, 406.700, 420.300, 434, 447.600, 461.300, 475, 488.700, 502.300, 515.600, 529];
  return (
    <g>
      <L d="M32 146H166.500V128" />
      <L d="M32 259H166.500V1079.500H32" />
      <L d="M32 278.500H147V1060H32" c="#d00000" w={1.300} />
      <L d="M32 297.500H147M32 311.500H87M32 325H147M50 311.500V529M86.500 297.500V529M32 529H147" w={1.200} c="#b5b5b5" />
      {rows.map((y) => <L key={y} d={`M32 ${y}H50M87 ${y}H147`} c="#b5b5b5" />)}
      <L d="M50 406.700H87" c="#b5b5b5" />
      <T x={39} y={305} s={10} w="bold">量</T>
      <T x={117} y={312} s={11} w="bold">备注</T>
      <T x={41} y={319} s={7} w="bold">(kg)</T>
      <T x={68} y={319} s={7} w="bold">总重(kg)</T>
      {LNUMS.map((t, i) => <T key={i} x={46} y={332 + i * 13.630} s={7} a="end" w="bold">{t}</T>)}
      <T x={69} y={366} s={7} w="bold">8704</T>
      <T x={69} y={468} s={7} w="bold">1125</T>
      <T x={117} y={359} s={8} w="bold">坡口</T>
      <T x={117} y={386} s={8} w="bold">帧边</T>
      <T x={117} y={441} s={8} w="bold">坡口</T>
      <T x={117} y={469} s={8} w="bold">帧边</T>
      <L d="M63 585.500H111M63 595.500H111" c="#00b000" w={1.300} />
      <L d="M83.500 596V645M90.500 596V645" c="#00b000" w={1.300} />
      <L d="M87 584V645" c={YE} />
      <L d="M63 582V600M111 582V600M81 645H93" />
      <L d="M82 584V564M92 584V564M82 564H92" c={GR} />
      <T x={87} y={563} s={6} c={GR}>15</T>
      <T x={87} y={627} s={6} c={GR} r={-45}>15</T>
      <ellipse cx="87" cy="597" rx="4" ry="2" stroke="#20d020" fill="none" />
      <T x={87.500} y={676} s={10} w="bold">3-3</T>
      <L d="M78 681.500H97" c="#a000a0" w={1.500} />
      <L d="M82 789H129M84 794H129" c="#00b000" w={1.300} />
      <L d="M79.500 792V837M84 794V837" c="#00b000" w={1.300} />
      <L d="M129 786V797M76 838H86M49 782H72L82 792M64 775L57 782L64 790Z" />
      <L d="M62 790H76M62 793H76" c={GR} />
      <T x={57} y={793} s={6} c={GR} r={-45}>30</T>
      <Bub x={106} y={861.500} r={6} t="1" s={11} />
      <T x={35} y={957} s={6.500} a="start" w="bold">有和锚栓的使用强。</T>
      <T x={32.500} y={992} s={6.500} a="start" w="bold">的垂直度和支撑加强联</T>
      <T x={33} y={1003} s={6.500} a="start" w="bold">接。</T>
      <T x={94} y={1015} s={6.500} a="end" w="bold">前制锚栓和柱面有</T>
      <T x={94} y={1027} s={6.500} a="end" w="bold">不得将锚栓损坏在一</T>
      <T x={33} y={1039} s={6.500} a="start" w="bold">增。</T>
      <T x={33} y={1051} s={6.500} a="start" w="bold">量，</T>
    </g>
  );
}

function Bottom() {
  const tx = [979.500, 1007.500, 1044, 1116, 1153.500, 1212, 1332, 1392];
  return (
    <g>
      <L d="M32 1204H198V1301" />
      <L d="M32 1223.500H178.500V1301" c="#d00000" w={1.300} />
      <L d="M60 1223V1273H108M56.500 1268H65V1277H56.500Z" c="#e0e0e0" />
      <L d="M62 1208L67.500 1214L73 1208M67.500 1214V1220" c="#e0e0e0" />
      <L d="M113 1260L125 1273M125 1260L113 1273" c="#e0e0e0" />
      <L d="M250 1301V1204H1412V1301" />
      <L d="M298.500 1301V1223.500H980" c="#d00000" w={1.300} />
      <L d="M1513 1301V1204H1565" />
      <L d="M1565 1223.500H1563V1301" c="#d00000" w={1.300} />
      <L d="M979.500 1223.500H1392V1301M979.500 1223.500V1301M979.500 1243H1392M1153.500 1257H1332M979.500 1271H1392M1007 1284H1332M979.500 1298H1392" w={1.100} c="#d0d0d0" />
      {tx.slice(1, 5).map((x) => <L key={x} d={`M${x} 1243V1301`} c="#d0d0d0" />)}
      <L d="M1212 1243V1301M1332 1243V1301M1183.500 1257V1301M1257.500 1257V1301M1295 1257V1301" c="#d0d0d0" />
      <L d="M1332 1284H1392" c="#d0d0d0" />
      <T x={1188} y={1234} s={8} w="bold">材 料 表</T>
      {[[994, 1257, '标号'], [1026, 1257, '编号'], [1080, 1257, '规格'], [1135, 1257, '长度(mm)'], [1183, 1250, '数 量'], [1272, 1250, '重 量'], [1361, 1257, '备注'], [1168, 1264, '正'], [1198, 1264, '反'], [1235, 1264, '单重(kg)'], [1275, 1264, '共重(kg)'], [1314, 1264, '总重(kg)'], [1026, 1278, '1'], [1026, 1292, '2'], [1080, 1278, '300X10'], [1080, 1292, '225X10'], [1135, 1278, '456'], [1135, 1292, '180'], [1168, 1278, '40'], [1168, 1292, '40'], [1235, 1278, '6.6'], [1235, 1292, '3.3'], [1275, 1278, '278'], [1275, 1292, '131'], [994, 1292, '锚栓板'], [1314, 1292, '404']].map(([x, y, t], i) => <T key={i} x={x} y={y} s={7} c="#f0f0f0" w="bold">{t}</T>)}
      <L d="M426 1283H492M426 1283V1301M431 1287V1301" c="#00c000" w={1.300} />
      <L d="M357 1275V1301M492 1275V1301M661 1275V1301" c="#ffffff" />
      <T x={440} y={1290} s={7} w="bold" c="#ffffff">400</T>
      <L d="M587 1284H661M587 1284V1301M592 1263V1301M630 1263V1301" c="#00c000" w={1.300} />
      <L d="M592 1263H635L612 1276M635 1251H663" />
      <T x={648} y={1247} s={7.500} w="bold">率筋另拌</T>
      <L d="M597 1250V1262" c="#c000c0" />
      <T x={604} y={1255} s={7} w="bold">2a</T>
      <L d="M482 1250V1258" c="#c000c0" />
      <L d="M738 1259H786L798 1285M800 1258H840M800 1258V1270M840 1258V1290" c={GR} />
      <T x={752} y={1255} s={7} w="bold">加腋段筋</T>
      <T x={820} y={1254} s={6} c={GR}>400</T>
      <Bub x={811} y={1272} r={5} t="11" s={7} />
      <L d="M770 1276V1290M783 1276V1300M795 1288H802M760 1290H800" c="#ffffff" />
      <L d="M780 1297L796 1301" c="#e0e000" w={1.500} />
      <L d="M800 1283H838V1301M800 1301H838" c="#00c000" w={1.300} />
      <L d="M844 1278H902" c="#ffffff" />
      <Bub x={850} y={1290} r={5} t="10" s={7} />
      <L d="M866 1293H877" c="#e070e0" w={1.500} />
      <L d="M733 1296H737" c="#e070e0" w={1.500} />
    </g>
  );
}

function Drawing() {
  return (
    <svg className="absolute inset-0 block" width="1533" height="1173" viewBox="32 128 1533 1173">
      <LeftSheet />
      <L d="M265.500 259H1427.500V1079.500H265.500Z" />
      <L d="M313.500 278.500H1407.500V1060H313.500Z" c="#d00000" w={1.300} />
      <circle cx="266" cy="259" r="1.800" fill="#9ad29a" />
      <L d="M1565 259H1514V1079.500H1565" />
      <L d="M1565 278.500H1563V1060H1565" c="#d00000" w={1.300} />
      <Plan />
      <Details />
      <Bottom />
      <g>
        {WATER.map(([x, y], i) => (
          <text key={i} x={x} y={y} fontSize="33" fontWeight="bold" transform={`rotate(-44 ${x} ${y})`} fill="#3a3a3a" fillOpacity="0.62" fontFamily="'Noto Sans','Noto Sans CJK SC',sans-serif">知末网 www.znzmo.com</text>
        ))}
      </g>
      <circle cx="1484" cy="209" r="52" stroke="#2b2b2b" strokeWidth="13" fill="none" />
      <rect x="1459" y="184" width="50" height="50" fill="#a2a2a2" stroke="#6a6a6a" />
      <rect x="1469" y="193.500" width="31" height="31" fill="#8b8b8b" />
      <path d="M1483 197V219M1469 218.500H1500M1483 204H1497" stroke="#4a4a4a" strokeWidth="1.300" fill="none" />
      <T x={1484} y={156} s={17} c="#8d8d8d">北</T>
      <T x={1484} y={266} s={17} c="#8d8d8d">南</T>
      <T x={1429} y={210} s={17} c="#8d8d8d">西</T>
      <T x={1538} y={210} s={17} c="#8d8d8d">东</T>
    </svg>
  );
}

function CommandOverlay() {
  const H = 'absolute left-[296px] h-[15px] bg-[#4d4d4d] rounded-[2px] px-[2px] text-[12px] leading-[15px] text-[#bcbcbc] whitespace-pre font-["Liberation_Mono","Noto_Sans_CJK_SC",monospace]';
  return (
    <>
      <div className={`${H} top-[1090px]`}>命令: _textedit</div>
      <div className={`${H} top-[1110px]`}>当前设置: 编辑模式 = Multiple</div>
      <div className={`${H} top-[1129px]`}>选择注释对象或 [放弃(U)/模式(M)]: *取消*</div>
      <div className="absolute left-[236px] top-[1147px] w-[1061px] h-[25px] flex items-stretch">
        <div className="w-[54px] bg-[#2b3340] flex items-center rounded-l-[3px] shrink-0">
          <div className="w-[10px] flex justify-center"><div className="w-[4px] h-[16px] border-x border-dotted border-[#aeb5c0]" /></div>
          <span className="w-[18px] text-center text-[14px] text-[#c8cdd5] leading-none">✕</span>
          <Cell n="wrench" w="w-[26px]" s={17} />
        </div>
        <div className="flex-1 bg-white/70 flex items-center rounded-r-[2px] relative">
          <div className="ml-[3px] w-[14px] h-[14px] bg-[#3c4452] border border-[#222] flex items-center justify-center text-[8px] text-white leading-none">›_</div>
          <div className="ml-[3px] w-0 h-0 border-x-[3px] border-x-transparent border-t-[4px] border-t-[#333]" />
          <span className="ml-[8px] text-[12.500px] italic text-[#6b6b6b] whitespace-nowrap">键入命令</span>
          <div className="absolute right-[4px] top-[9px] w-0 h-0 border-x-[4px] border-x-transparent border-b-[5px] border-b-[#333]" />
        </div>
      </div>
    </>
  );
}

function Status() {
  const Panel = ({ children, w }) => <div className={`h-[24px] bg-[#3b4454] flex items-center shrink-0 ${w || ''}`}>{children}</div>;
  return (
    <div className="h-[30px] bg-[#232a35] flex items-start shrink-0 pt-[2px] text-[12px] text-[#d5d9e0]">
      <div className="w-[429px] h-[17px] flex items-start pl-[15px] gap-[1px] shrink-0">
        <div className="w-[46px] h-[17px] bg-[#465062] rounded-b-[5px] flex items-center justify-center font-bold text-[#f2f4f7]">模型</div>
        <div className="w-[51px] h-[17px] bg-[#343c4a] rounded-b-[5px] flex items-center justify-center text-[#c3c8d1]">布局1</div>
        <div className="w-[20px] h-[15px] bg-[#343c4a] rounded-b-[5px] ml-[4px] flex items-center justify-center font-bold text-[#c3c8d1]">+</div>
      </div>
      <Panel w="w-[136px] justify-end pr-[5px]"><span className="whitespace-nowrap">168974, -76833, 0</span></Panel>
      <div className="w-[4px]" />
      <Panel w="w-[28px] justify-center">模型</Panel>
      <div className="w-[3px]" />
      <Panel w="w-[62px]"><Cell n="grid" w="w-[22px]" /><div className="w-[2px]" /><Cell n="sgrid" w="w-[22px]" /><Car w="w-[16px]" /></Panel>
      <div className="w-[3px]" />
      <Panel>
        <Cell n="stm" w="w-[23px]" />
        <div className="w-[2px]" />
        <Cell n="stinf" w="w-[22px]" hl />
        <Cell n="stort" w="w-[23px]" />
        <Cell n="stpol" w="w-[23px]" />
        <Car w="w-[18px]" />
        <Cell n="stisn" w="w-[22px]" />
        <Car w="w-[18px]" />
        <Cell n="stang" w="w-[24px]" />
        <Cell n="stbox" w="w-[21px]" hl />
        <Car w="w-[16px]" />
      </Panel>
      <div className="w-[2px]" />
      <Panel>
        <Cell n="stlw" w="w-[22px]" />
        <div className="w-[3px]" />
        <Cell n="sttr" w="w-[21px]" hl />
        <div className="w-[2px]" />
        <Cell n="stadd" w="w-[22px]" />
        <div className="w-[3px]" />
        <Cell n="stiso" w="w-[22px]" />
        <Car w="w-[16px]" />
      </Panel>
      <div className="w-[2px]" />
      <Panel>
        <Cell n="stucs" w="w-[22px]" />
        <div className="w-[3px]" />
        <Cell n="stann" w="w-[22px]" />
        <Car w="w-[14px]" />
        <div className="w-[2px]" />
        <Cell n="stwork" w="w-[23px]" hl />
        <Car w="w-[14px]" />
      </Panel>
      <div className="w-[4px]" />
      <Panel>
        <Cell n="stannA" w="w-[22px]" hl />
        <div className="w-[2px]" />
        <Cell n="stannA" w="w-[22px]" />
        <Cell n="stannA" w="w-[23px]" />
        <span className="w-[54px] text-center whitespace-nowrap text-[12px]">1:1 / 100%</span>
        <Car w="w-[16px]" />
      </Panel>
      <div className="w-[3px]" />
      <Panel><Cell n="gear" w="w-[22px]" /><Car w="w-[17px]" /><div className="w-px" /><Cell n="plus" w="w-[22px]" /></Panel>
      <div className="w-[4px]" />
      <Panel w="w-[94px]">
        <Cell n="ruler" w="w-[20px]" />
        <span className="ml-[7px] w-[51px]">小数</span>
        <Car w="w-[16px]" />
      </Panel>
      <div className="w-px" />
      <Panel><Cell n="stprop" w="w-[22px]" /></Panel>
      <div className="w-[4px]" />
      <Panel><Cell n="stlay" w="w-[24px]" /><Car w="w-[15px]" /><Cell n="stshp" w="w-[22px]" /></Panel>
      <div className="w-[6px]" />
      <Panel><Cell n="stdial" w="w-[22px]" hl /><div className="w-[3px]" /><Cell n="stchk" w="w-[22px]" /></Panel>
      <div className="w-[3px]" />
      <Panel><Cell n="stfull" w="w-[22px]" /><div className="w-[2px]" /><Cell n="ham" w="w-[22px]" /></Panel>
    </div>
  );
}

export default function App() {
  return (
    <div className="relative w-[1600px] h-[1333px] overflow-hidden bg-black flex flex-col font-['Liberation_Sans','Noto_Sans_CJK_SC',sans-serif]">
      <TitleBar />
      <MenuBar />
      <Tabs />
      <Toolbars />
      <div className="flex-1 flex min-h-0">
        <div className="w-[32px] bg-[#3b4454] flex items-start shrink-0 pl-[4px]"><Side list={LEFT} /></div>
        <div className="relative flex-1 bg-black overflow-hidden">
          <Drawing />
          <div className="absolute left-[1429px] top-[166px] w-[46px] h-[17px] bg-[#6c6c76] rounded-[4px] flex items-center pl-[4px] text-[10px] text-[#9a9aa2] leading-none">WCS<div className="ml-[6px] w-0 h-0 border-x-[4px] border-x-transparent border-t-[4px] border-t-[#8f8f9c]" /></div>
          <CommandOverlay />
        </div>
        <div className="w-[35px] bg-[#3b4454] flex justify-center items-start shrink-0 pr-[2px]"><Side list={RIGHT} /></div>
      </div>
      <Status />
      <div className="h-[2px] bg-[#0a9be0] shrink-0" />
      <div className="absolute left-[1407px] top-[1193px] text-[61px] font-medium leading-[84px] text-[#cfcfcf] whitespace-nowrap pointer-events-none">知末</div>
      <div className="absolute left-[1361px] top-[1276px] text-[32px] leading-[36px] text-white whitespace-nowrap pointer-events-none">ID: 1172193567</div>
    </div>
  );
}
